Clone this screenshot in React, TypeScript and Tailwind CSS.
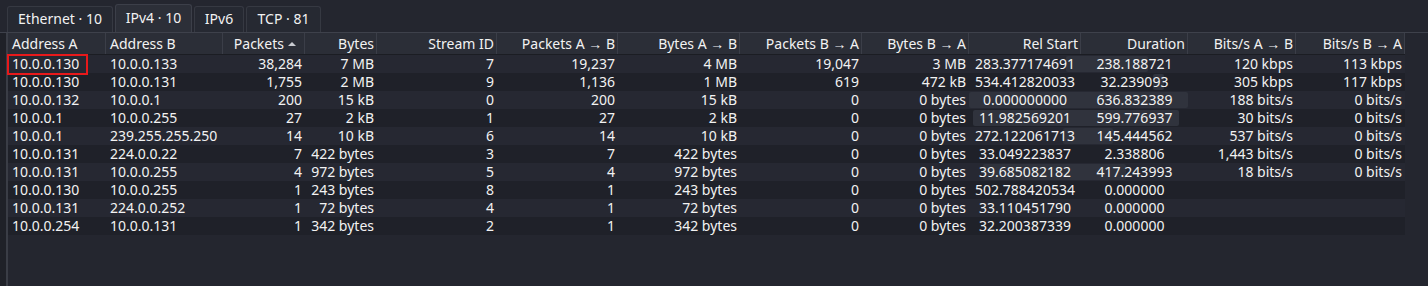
import React from "react";

const widths = [98, 117, 82, 72, 120, 121, 122, 122, 107, 112, 107, 108, 109];
const headers = [
  "Address A",
  "Address B",
  "Packets",
  "Bytes",
  "Stream ID",
  "Packets A → B",
  "Bytes A → B",
  "Packets B → A",
  "Bytes B → A",
  "Rel Start",
  "Duration",
  "Bits/s A → B",
  "Bits/s B → A",
];

const rows: string[][] = [
  ["10.0.0.130", "10.0.0.133", "38,284", "7 MB", "7", "19,237", "4 MB", "19,047", "3 MB", "283.377174691", "238.188721", "120 kbps", "113 kbps"],
  ["10.0.0.130", "10.0.0.131", "1,755", "2 MB", "9", "1,136", "1 MB", "619", "472 kB", "534.412820033", "32.239093", "305 kbps", "117 kbps"],
  ["10.0.0.132", "10.0.0.1", "200", "15 kB", "0", "200", "15 kB", "0", "0 bytes", "0.000000000", "636.832389", "188 bits/s", "0 bits/s"],
  ["10.0.0.1", "10.0.0.255", "27", "2 kB", "1", "27", "2 kB", "0", "0 bytes", "11.982569201", "599.776937", "30 bits/s", "0 bits/s"],
  ["10.0.0.1", "239.255.255.250", "14", "10 kB", "6", "14", "10 kB", "0", "0 bytes", "272.122061713", "145.444562", "537 bits/s", "0 bits/s"],
  ["10.0.0.131", "224.0.0.22", "7", "422 bytes", "3", "7", "422 bytes", "0", "0 bytes", "33.049223837", "2.338806", "1,443 bits/s", "0 bits/s"],
  ["10.0.0.131", "10.0.0.255", "4", "972 bytes", "5", "4", "972 bytes", "0", "0 bytes", "39.685082182", "417.243993", "18 bits/s", "0 bits/s"],
  ["10.0.0.130", "10.0.0.255", "1", "243 bytes", "8", "1", "243 bytes", "0", "0 bytes", "502.788420534", "0.000000", "", ""],
  ["10.0.0.131", "224.0.0.252", "1", "72 bytes", "4", "1", "72 bytes", "0", "0 bytes", "33.110451790", "0.000000", "", ""],
  ["10.0.0.254", "10.0.0.131", "1", "342 bytes", "2", "1", "342 bytes", "0", "0 bytes", "32.200387339", "0.000000", "", ""],
];

const maxEnd = Math.max(...rows.map((r) => parseFloat(r[9]) + parseFloat(r[10])));
const barLeft = widths.slice(0, 9).reduce((a, b) => a + b, 0);
const barSpan = widths[9] + widths[10];

function align(i: number) {
  if (i < 2) return "justify-start pl-[4px]";
  if (i === 9 || i === 10) return "justify-center";
  return "justify-end pr-[3px]";
}

const tabs = [
  { label: "Ethernet · 10", w: "w-[106px]", sel: false },
  { label: "IPv4 · 10", w: "w-[77px]", sel: true },
  { label: "IPv6", w: "w-[50px]", sel: false },
  { label: "TCP · 81", w: "w-[75px]", sel: false },
];

export default function App() {
  return (
    <div
      className="w-[1428px] h-[286px] overflow-hidden bg-[#24262f] text-[14px] text-[#f2f2f2] flex flex-col"
      style={{ fontFamily: '"Noto Sans", "Open Sans", sans-serif' }}
    >
      {/* tab bar */}
      <div className="h-[32px] flex items-end pl-[7px] gap-[2px] shrink-0">
        {tabs.map((t) => (
          <div
            key={t.label}
            className={
              t.sel
                ? `${t.w} h-[28px] flex items-center justify-center rounded-t-[3px] border border-b-0 border-[#3c3f49] bg-[#2c2f38] leading-none pb-[1px]`
                : `${t.w} h-[26px] flex items-center justify-center rounded-t-[3px] border border-b-0 border-[#363942] bg-[#262932] leading-none pb-[1px]`
            }
          >
            {t.label}
          </div>
        ))}
      </div>
      <div className="h-[1px] bg-[#3e414b] shrink-0" />
      {/* table area */}
      <div className="flex flex-1 min-h-0">
        <div className="w-[6px] bg-[#1f2128] shrink-0" />
        <div className="w-[2px] bg-[#3a3d46] shrink-0" />
        <div className="flex flex-col">
          {/* header */}
          <div className="flex h-[22px] bg-[#2b2e37] border-b border-[#1b1d23]">
            {headers.map((h, i) => (
              <div
                key={h}
                style={{ width: widths[i] }}
                className={`h-full flex items-center shrink-0 border-r border-[#3b3e48] whitespace-nowrap ${
                  i < 2 ? "justify-start pl-[4px]" : "justify-end pr-[2px]"
                }`}
              >
                <span>{h}</span>
                {i === 2 && (
                  <svg width="14" height="8" viewBox="0 0 14 8" className="ml-[1px] mr-[3px]">
                    <path d="M3 6 L7 2 L11 6 Z" fill="#c9cbd1" />
                  </svg>
                )}
              </div>
            ))}
          </div>
          {/* rows */}
          {rows.map((r, ri) => {
            const start = parseFloat(r[9]);
            const dur = parseFloat(r[10]);
            const bl = barLeft + (start / maxEnd) * barSpan;
            const bw = Math.max((dur / maxEnd) * barSpan, 0);
            return (
              <div
                key={ri}
                className={`relative flex h-[18px] ${ri === 0 ? "z-10" : ""} ${
                  ri % 2 === 0 ? "bg-[#262832]" : "bg-[#1f2129]"
                }`}
              >
                {bw > 1 && (
                  <div
                    className="absolute top-[1px] bottom-[1px] rounded-[2px] bg-[#30333d]"
                    style={{ left: bl, width: bw }}
                  />
                )}
                {r.map((c, ci) => (
                  <div
                    key={ci}
                    style={{ width: widths[ci] }}
                    className={`relative h-full flex items-center shrink-0 whitespace-nowrap leading-[18px] ${align(ci)}`}
                  >
                    {c}
                    {ri === 0 && ci === 0 && (
                      <div className="absolute left-[-1px] top-[-1px] w-[81px] h-[21px] border-2 border-[#e8191b] z-20" />
                    )}
                  </div>
                ))}
              </div>
            );
          })}
        </div>
      </div>
    </div>
  );
}
